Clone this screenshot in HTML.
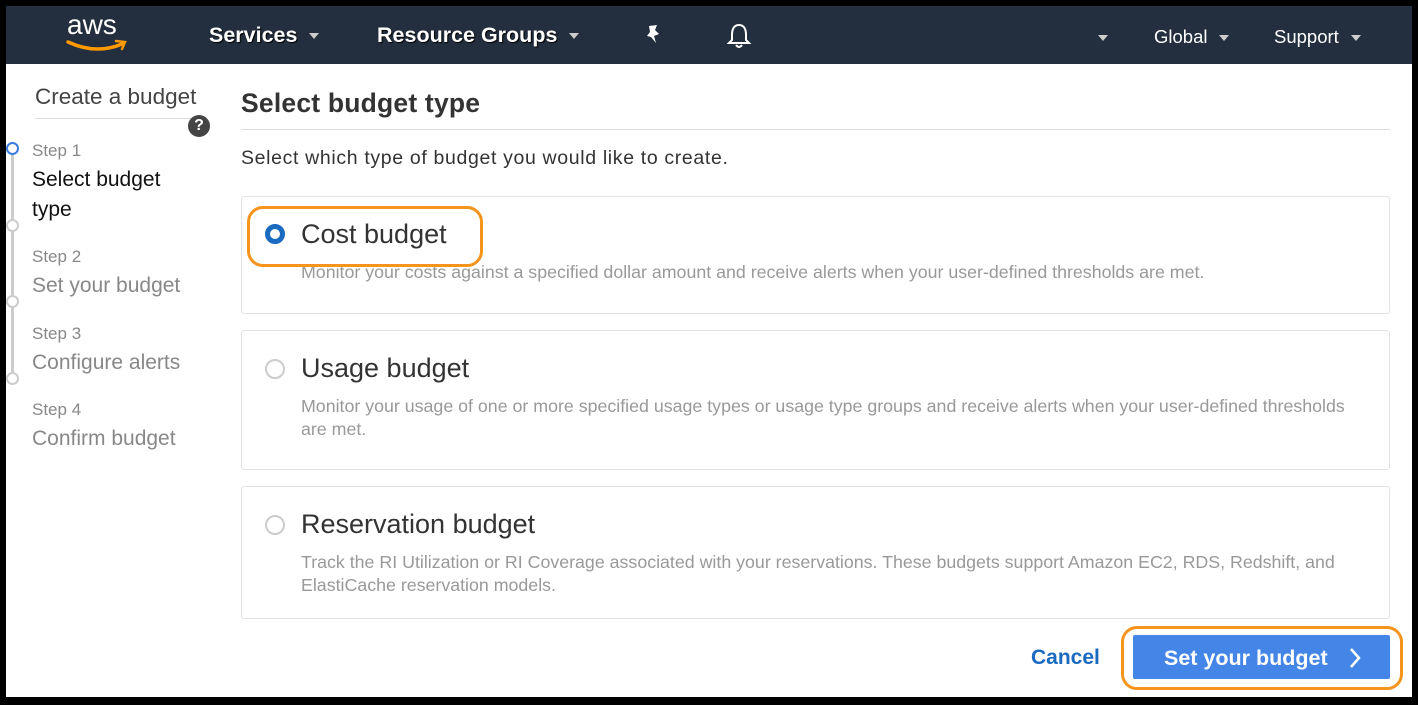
<!DOCTYPE html>
<html><head><meta charset="utf-8"><style>
*{margin:0;padding:0;box-sizing:border-box}
body{width:1418px;height:705px;background:#000;position:relative;overflow:hidden;font-family:"Liberation Sans",Arial,sans-serif}
.page{position:absolute;left:6px;top:6px;width:1406px;height:691px;background:#fff}
.nav{position:absolute;left:6px;top:6px;width:1406px;height:58px;background:#232f3e;color:#fff}
.a{position:absolute;white-space:nowrap}
.nav .t{font-weight:bold;font-size:21.5px;color:#fff;top:17px;text-shadow:1px 1px 1px #000}
.nav .s{font-size:18.5px;color:#fff;top:20px}
.car{display:inline-block;width:0;height:0;border-left:5px solid transparent;border-right:5px solid transparent;border-top:6px solid #ccc;vertical-align:middle;margin-left:12px}
.box{position:absolute;left:241px;width:1149px;border:1px solid #e3e3e3;border-radius:3px;background:#fff}
.rad{position:absolute;left:23px;width:20px;height:20px;border-radius:50%;border:2px solid #ccc;background:#fff}
.rad.on{border:5px solid #1a6ac0}
.bt{position:absolute;left:59px;font-size:27px;color:#333}
.bd{position:absolute;left:59px;font-size:17.8px;color:#999;line-height:23px;width:1062px;white-space:normal}
.stp{position:absolute;left:32px;font-size:17px;color:#888}
.stn{position:absolute;left:32px;font-size:21px;color:#888;line-height:30px}
.dot{position:absolute;left:6px;width:13px;height:13px;border-radius:50%;border:2px solid #ccc;background:#fff}
</style></head><body>
<div class="page"></div>
<div class="nav">
  <div class="a" style="left:61px;top:3px;font-size:28px;color:#fff">aws</div>
  <svg class="a" style="left:60px;top:33px" width="64" height="14" viewBox="0 0 64 14"><path d="M2 3 Q30 16 56 5" stroke="#f90" stroke-width="3.5" fill="none" stroke-linecap="round"/><path d="M50 2 L59 3 L56 10" stroke="#f90" stroke-width="2.5" fill="none" stroke-linecap="round"/></svg>
  <div class="a t" style="left:203px">Services<span class="car"></span></div>
  <div class="a t" style="left:371px">Resource Groups<span class="car"></span></div>
  <svg class="a" style="left:638px;top:18px" width="20" height="22" viewBox="0 0 20 22"><path d="M5 2 L13 1 L11 6 L15 10 L10 12 L12 19 L7 13 L3 12 L6 8 Z" fill="#fff"/></svg>
  <svg class="a" style="left:719px;top:16px" width="28" height="28" viewBox="0 0 28 28"><path d="M14 3 C8 3 7 9 7 13 L7 18 L4 21 L24 21 L21 18 L21 13 C21 9 20 3 14 3 Z M11 23 Q14 27 17 23" stroke="#fff" stroke-width="2" fill="none"/></svg>
  <div class="a s" style="left:1092px"><span class="car" style="margin:0"></span></div>
  <div class="a s" style="left:1148px">Global<span class="car"></span></div>
  <div class="a s" style="left:1268px">Support<span class="car"></span></div>
</div>

<div class="a" style="left:35px;top:84px;font-size:22.5px;color:#444">Create a budget</div>
<div class="a" style="left:35px;top:118px;width:170px;height:1px;background:#ddd"></div>
<div class="a" style="left:188px;top:115px;width:22px;height:22px;border-radius:50%;background:#444;color:#fff;font-weight:bold;font-size:16px;text-align:center;line-height:22px">?</div>

<div class="a" style="left:11px;top:150px;width:3px;height:228px;background:#ccc"></div>
<div class="dot" style="top:142px;border-color:#3b7ddd"></div>
<div class="dot" style="top:219px"></div>
<div class="dot" style="top:295px"></div>
<div class="dot" style="top:372px"></div>
<div class="stp" style="top:141px">Step 1</div>
<div class="stn" style="top:165px;color:#111">Select budget<br>type</div>
<div class="stp" style="top:247px">Step 2</div>
<div class="stn" style="top:271px">Set your budget</div>
<div class="stp" style="top:324px">Step 3</div>
<div class="stn" style="top:348px">Configure alerts</div>
<div class="stp" style="top:400px">Step 4</div>
<div class="stn" style="top:424px">Confirm budget</div>

<div class="a" style="left:241px;top:88px;font-size:26.5px;font-weight:bold;color:#333;letter-spacing:0.2px">Select budget type</div>
<div class="a" style="left:241px;top:129px;width:1149px;height:1px;background:#ddd"></div>
<div class="a" style="left:241px;top:147px;font-size:19.5px;letter-spacing:0.65px;color:#333">Select which type of budget you would like to create.</div>

<div class="box" style="top:196px;height:118px">
  <div class="rad on" style="top:27px"></div>
  <div class="bt" style="top:22px">Cost budget</div>
  <div class="bd" style="top:64px">Monitor your costs against a specified dollar amount and receive alerts when your user-defined thresholds are met.</div>
</div>
<div class="box" style="top:330px;height:140px">
  <div class="rad" style="top:28px"></div>
  <div class="bt" style="top:22px">Usage budget</div>
  <div class="bd" style="top:64px">Monitor your usage of one or more specified usage types or usage type groups and receive alerts when your user-defined thresholds<br>are met.</div>
</div>
<div class="box" style="top:486px;height:133px">
  <div class="rad" style="top:28px"></div>
  <div class="bt" style="top:22px">Reservation budget</div>
  <div class="bd" style="top:64px">Track the RI Utilization or RI Coverage associated with your reservations. These budgets support Amazon EC2, RDS, Redshift, and ElastiCache reservation models.</div>
</div>
<div class="a" style="left:247px;top:206px;width:236px;height:61px;border:3px solid #f7941d;border-radius:16px"></div>

<div class="a" style="left:1031px;top:646px;font-size:21px;font-weight:bold;color:#1a6ac0">Cancel</div>
<div class="a" style="left:1133px;top:635px;width:257px;height:44px;background:#4486e8;border-radius:2px"></div>
<div class="a" style="left:1164px;top:646px;font-size:21.5px;font-weight:bold;color:#fff">Set your budget</div>
<svg class="a" style="left:1347px;top:646px" width="16" height="24" viewBox="0 0 16 24"><path d="M4 3 L12 12 L4 21" stroke="#fff" stroke-width="2.5" fill="none"/></svg>
<div class="a" style="left:1121px;top:626px;width:282px;height:64px;border:3px solid #f7941d;border-radius:16px"></div>
</body></html>
